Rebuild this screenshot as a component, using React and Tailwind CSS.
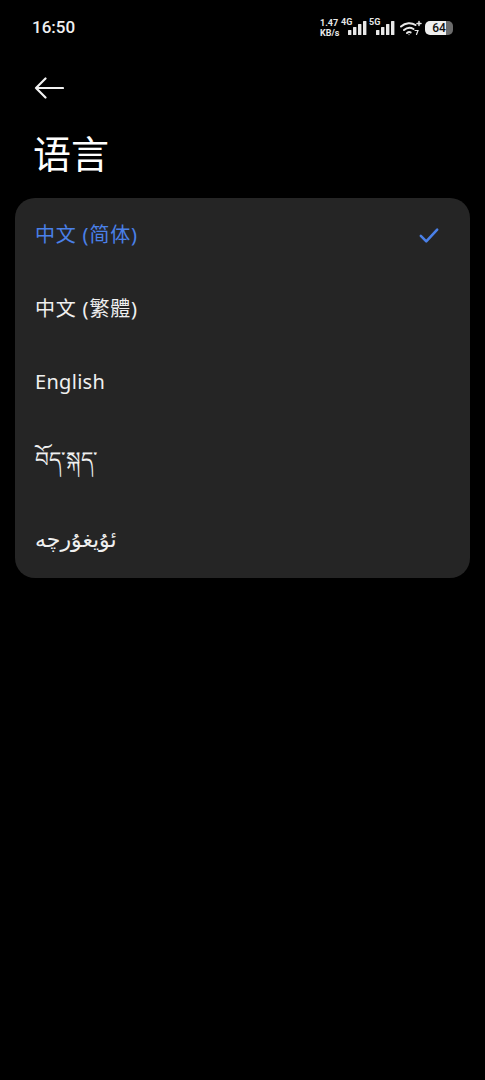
import React from 'react';

const languages = [
  { label: '中文 (简体)', height: 'h-[74px]', text: 'text-[20px] tracking-[0.8px]', active: true },
  { label: '中文 (繁體)', height: 'h-[73px]', text: 'text-[20px] tracking-[0.8px]', font: "font-['Noto_Sans','Noto_Sans_CJK_TC',sans-serif]" },
  { label: 'English', height: 'h-[73px]', text: 'text-[20px] tracking-[0.3px]' },
  { label: 'བོད་སྐད་', height: 'h-[85px]', text: 'text-[21.5px] pb-[2px]' },
  { label: 'ئۇيغۇرچە', height: 'h-[75px]', text: 'text-[22px] pb-[4px]', dir: 'rtl' },
];

const SignalBars = () => (
  <svg width="20" height="16" viewBox="0 0 20 16" fill="#e8e8e8">
    <rect x="0" y="10" width="3.4" height="5" rx="0.5" />
    <rect x="5" y="7" width="3.4" height="8" rx="0.5" />
    <rect x="10" y="4" width="3.4" height="11" rx="0.5" />
    <rect x="15" y="1" width="3.4" height="14" rx="0.5" />
  </svg>
);

const Wifi = () => (
  <svg width="22" height="16" viewBox="0 0 22 16" fill="none" stroke="#e8e8e8" strokeWidth="2" strokeLinecap="round">
    <path d="M1 6.5C5.5 2.5 11.5 2.5 15.5 5" />
    <path d="M4 10c3-2.6 6.5-2.8 9.5-1" />
    <path d="M7 13c1.2-1 2.6-1.2 3.6-.6" />
    <path d="M17 3.5h4M19 1.5v4" strokeWidth="1.5" />
    <circle cx="9" cy="14.6" r="0.6" fill="#e8e8e8" stroke="none" />
    <path d="M15 10.5h3l-1.5 4" strokeWidth="1.2" />
  </svg>
);

const StatusBar = () => (
  <div className="flex items-center justify-between h-[55px] pl-[32px] pr-[32px]">
    <span className="text-[17px] font-medium text-[#f0f0f0] font-['Roboto',sans-serif]">16:50</span>
    <div className="flex items-center text-[#e8e8e8] font-['Roboto',sans-serif] font-bold">
      <div className="flex flex-col items-start w-[21px] text-[9px] leading-[10px]">
        <span>1.47</span>
        <span>KB/s</span>
      </div>
      <div className="relative w-[28px]">
        <span className="absolute left-0 -top-[3px] text-[9px] leading-[10px]">4G</span>
        <div className="pl-[7px]"><SignalBars /></div>
      </div>
      <div className="relative w-[31px]">
        <span className="absolute left-0 -top-[3px] text-[9px] leading-[10px]">5G</span>
        <div className="pl-[7px]"><SignalBars /></div>
      </div>
      <Wifi />
      <div className="ml-[3px] w-[28px] h-[14px] rounded-[5px] bg-[linear-gradient(90deg,#efefef_0,#efefef_75%,#6b6b6b_75%)] text-[#111] text-[12px] leading-[14px] text-center font-medium">64</div>
    </div>
  </div>
);

export default function App() {
  return (
    <div className="min-h-[1080px] bg-black font-['Noto_Sans','Noto_Sans_CJK_SC','Noto_Sans_Tibetan','DejaVu_Sans',sans-serif]">
      <StatusBar />
      <div className="pl-[34px] pt-[21px]">
        <svg className="block" width="30" height="24" viewBox="0 0 30 24" fill="none" stroke="#f2f2f2" strokeWidth="2.2" strokeLinecap="round" strokeLinejoin="round">
          <path d="M29 12H2M11.5 2.5 2 12l9.5 9.5" />
        </svg>
      </div>
      <h1 className="pl-[33px] mt-[28px] text-[38px] leading-[50px] font-normal text-white">语言</h1>
      <div className="mx-[15px] mt-[20px] rounded-[20px] bg-[#252525]">
        {languages.map((lang) => (
          <div key={lang.label} className={`flex items-center justify-between pl-[20px] pr-[31px] ${lang.height}`}>
            <span
              dir={lang.dir}
              className={`${lang.text} ${lang.font || ''} ${lang.active ? 'text-[#4a80e8]' : 'text-[#f0f0f0]'}`}
            >
              {lang.label}
            </span>
            {lang.active && (
              <svg width="20" height="17" viewBox="0 0 22 18" fill="none" stroke="#4a80e8" strokeWidth="2.8" strokeLinecap="round" strokeLinejoin="round">
                <path d="M2 9.5 8 15.5 20 2.5" />
              </svg>
            )}
          </div>
        ))}
      </div>
    </div>
  );
}
